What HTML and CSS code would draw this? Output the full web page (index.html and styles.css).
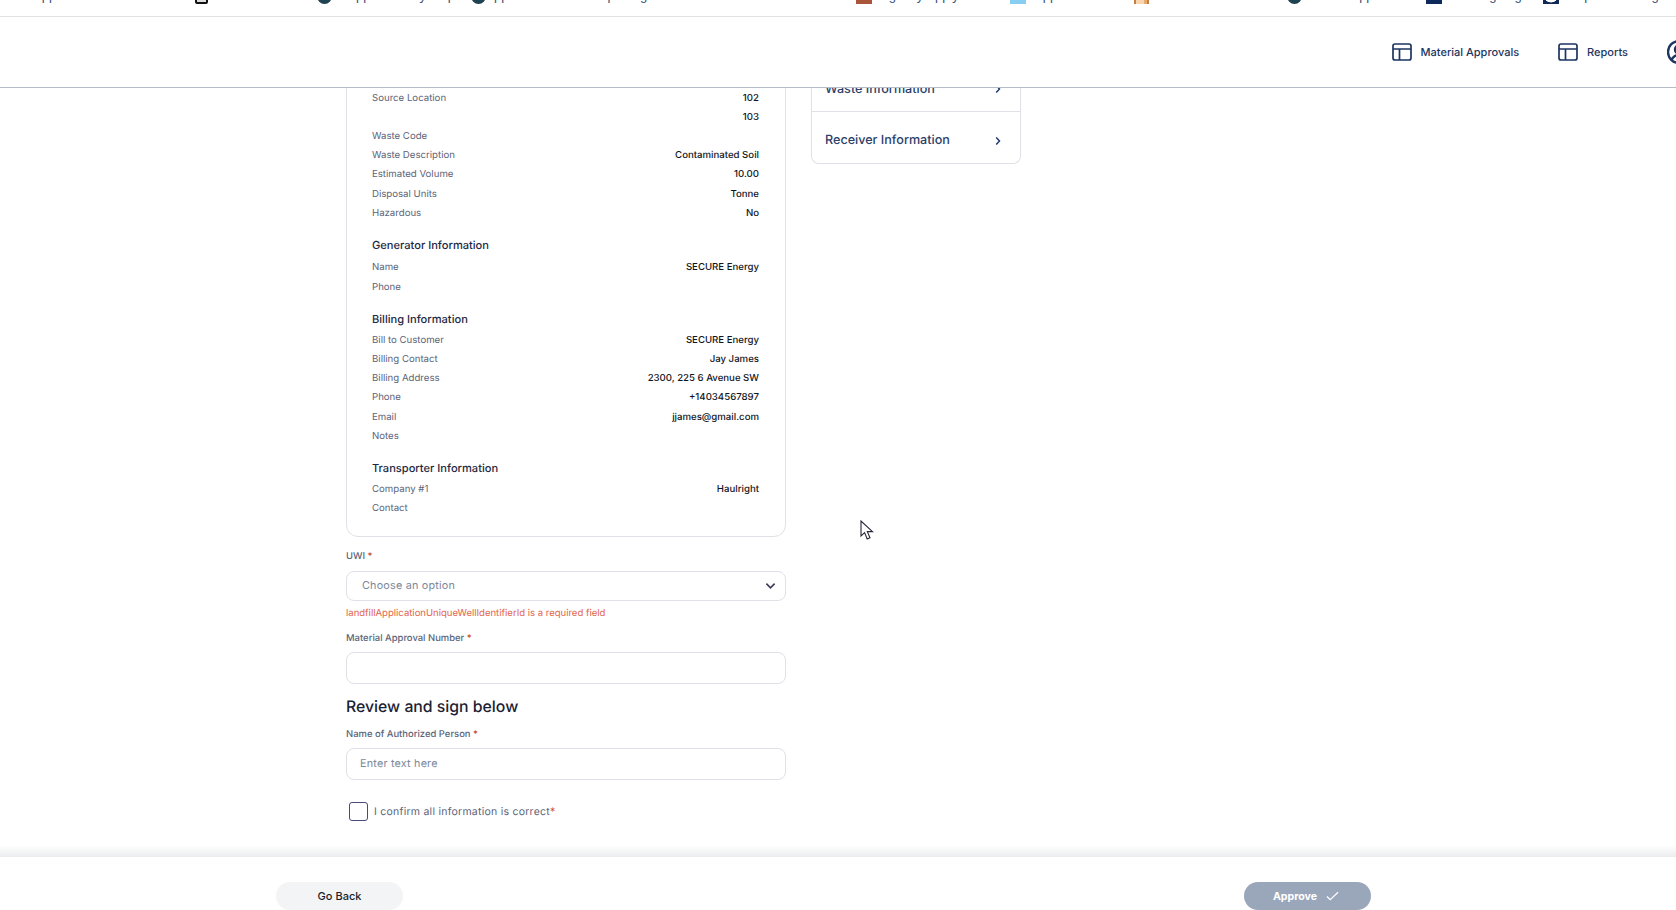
FILE: index.html
```html
<!DOCTYPE html>
<html lang="en">
<head>
<meta charset="utf-8">
<title>Material Approval</title>
<link rel="stylesheet" href="styles.css">
</head>
<body>
<div class="bookmarks">
  <div class="bookmark-row">
    <span class="bm bm-1">App</span>
    <span class="bm bm-2"><i class="fav fav-doc"></i>Home</span>
    <span class="bm bm-3"><i class="fav fav-teal"></i>Support Safety Map</span>
    <span class="bm bm-4"><i class="fav fav-teal"></i>pp Online Portal Reporting</span>
    <span class="bm bm-5"><i class="fav fav-brown"></i>Agency Apply</span>
    <span class="bm bm-6"><i class="fav fav-blue"></i>App</span>
    <span class="bm bm-7"><i class="fav fav-orange"></i>Document</span>
    <span class="bm bm-8"><i class="fav fav-teal"></i>Online Application</span>
    <span class="bm bm-9"><i class="fav fav-navy"></i>Training Log</span>
    <span class="bm bm-10"><i class="fav fav-ring"></i>Inspect Job Log</span>
  </div>
</div>

<header class="topbar">
  <nav class="nav">
    <a class="nav-item">
      <svg class="nav-icon" viewBox="0 0 20 18" fill="none"><rect x="1" y="1" width="18" height="16" rx="2"/><path d="M1 6h18M7.500 6v11"/></svg>
      <span>Material Approvals</span>
    </a>
    <a class="nav-item">
      <svg class="nav-icon" viewBox="0 0 20 18" fill="none"><rect x="1" y="1" width="18" height="16" rx="2"/><path d="M1 6h18M7.500 6v11"/></svg>
      <span>Reports</span>
    </a>
    <svg class="user-icon" viewBox="0 0 24 24" fill="none"><circle cx="12" cy="12" r="11"/><circle cx="12" cy="9.500" r="4"/><path d="M4.500 20c1.500-3.500 4-5 7.500-5s6 1.500 7.500 5"/></svg>
  </nav>
</header>

<main class="content">
  <div class="form-col">
    <section class="summary-card">
      <div class="row"><span>Source Location</span><b>102</b></div>
      <div class="row"><span></span><b>103</b></div>
      <div class="row"><span>Waste Code</span><b></b></div>
      <div class="row"><span>Waste Description</span><b>Contaminated Soil</b></div>
      <div class="row"><span>Estimated Volume</span><b>10.00</b></div>
      <div class="row"><span>Disposal Units</span><b>Tonne</b></div>
      <div class="row"><span>Hazardous</span><b>No</b></div>

      <h3 class="sub-head sub-head-first">Generator Information</h3>
      <div class="row"><span>Name</span><b>SECURE Energy</b></div>
      <div class="row"><span>Phone</span><b></b></div>

      <h3 class="sub-head">Billing Information</h3>
      <div class="row"><span>Bill to Customer</span><b>SECURE Energy</b></div>
      <div class="row"><span>Billing Contact</span><b>Jay James</b></div>
      <div class="row"><span>Billing Address</span><b>2300, 225 6 Avenue SW</b></div>
      <div class="row"><span>Phone</span><b>+14034567897</b></div>
      <div class="row"><span>Email</span><b>jjames@gmail.com</b></div>
      <div class="row"><span>Notes</span><b></b></div>

      <h3 class="sub-head">Transporter Information</h3>
      <div class="row"><span>Company #1</span><b>Haulright</b></div>
      <div class="row"><span>Contact</span><b></b></div>
    </section>

    <label class="field-label field-label-uwi">UWI <em>*</em></label>
    <div class="control select-control">
      <span class="placeholder">Choose an option</span>
      <svg class="chevron-down" viewBox="0 0 12 8" fill="none"><path d="M1.500 1.500 6 6l4.500-4.500"/></svg>
    </div>
    <p class="error">landfillApplicationUniqueWellIdentifierId is a required field</p>

    <label class="field-label field-label-number">Material Approval Number <em>*</em></label>
    <div class="control"></div>

    <h2 class="review-head">Review and sign below</h2>

    <label class="field-label field-label-name">Name of Authorized Person <em>*</em></label>
    <div class="control control-name"><span class="placeholder">Enter text here</span></div>

    <div class="confirm">
      <span class="checkbox"></span>
      <span class="confirm-text">I confirm all information is correct<em>*</em></span>
    </div>
  </div>

  <aside class="side-card">
    <div class="side-row side-row-first"><span>Waste Information</span><svg class="chevron-right" viewBox="0 0 6 10" fill="none"><path d="M1.200 1.500 4.500 5 1.200 8.500"/></svg></div>
    <div class="side-row"><span>Receiver Information</span><svg class="chevron-right" viewBox="0 0 6 10" fill="none"><path d="M1.200 1.500 4.500 5 1.200 8.500"/></svg></div>
  </aside>
</main>

<footer class="footer">
  <button class="btn btn-back">Go Back</button>
  <button class="btn btn-approve">Approve <svg class="check" viewBox="0 0 14 10" fill="none"><path d="M1 5.500 4.500 9 13 1"/></svg></button>
</footer>

<svg class="cursor" viewBox="0 0 14 21"><path d="M1 1v15l3.600-3.400 2.600 6.400 2.800-1.200-2.700-6.200H12.500z" fill="#fff" stroke="#2a2438" stroke-width="1.100"/></svg>
</body>
</html>
```

FILE: styles.css
```css
* { box-sizing: border-box; }
html, body { margin: 0; height: 100%; }
body {
  width: 1676px;
  height: 910px;
  overflow: hidden;
  display: flex;
  flex-direction: column;
  background: #fff;
  font-family: Inter, "Noto Sans", sans-serif;
  color: #1a1f2c;
  position: relative;
  text-rendering: geometricPrecision;
}

/* Browser bookmarks strip, mostly scrolled off */
.bookmarks {
  height: 17px;
  flex: none;
  overflow: hidden;
  background: #fff;
  border-bottom: 1px solid #e2e2e2;
}
.bookmark-row {
  display: flex;
  height: 16px;
  margin-top: -12px;
  padding-left: 33px;
  font: 13px/16px "Liberation Sans", sans-serif;
  color: #35507a;
  white-space: nowrap;
  text-rendering: auto;
}
.bm { display: flex; flex: none; gap: 8px; overflow: hidden; }
.bm-1 { width: 162px; }
.bm-2 { width: 122px; }
.bm-3 { width: 154px; }
.bm-4 { width: 385px; }
.bm-5 { width: 154px; }
.bm-6 { width: 124px; }
.bm-7 { width: 153px; }
.bm-8 { width: 139px; }
.bm-9 { width: 117px; }
.bm-10 { width: 133px; }
.fav { flex: none; display: block; width: 15px; height: 16px; }
.fav-doc { width: 13px; border: 2px solid #111; border-radius: 2px; background: #ddd; }
.fav-teal { border-radius: 50%; background: #1f4350; }
.fav-brown { width: 16px; background: #a9553a; }
.fav-blue { width: 16px; background: #88cdf2; }
.fav-orange { background: linear-gradient(90deg, #c47d45 0 2px, #f8d6b0 2px 10px, #e9a96d 10px 13px, #c47d45 13px); }
.fav-navy { width: 16px; background: #0e2a5c; }
.fav-ring { width: 16px; background: radial-gradient(circle at 50% 45%, #fff 0 7px, #10295a 7.500px); }

/* App header */
.topbar {
  height: 71px;
  flex: none;
  display: flex;
  justify-content: flex-end;
  align-items: center;
  background: #fff;
  border-bottom: 1px solid #b4bcc8;
  position: relative;
  z-index: 2;
}
.nav {
  display: flex;
  align-items: center;
  gap: 39px;
  margin-right: -15px;
}
.nav-item {
  display: flex;
  align-items: center;
  gap: 9px;
  font-size: 11px;
  font-weight: 500;
  color: #1c3561;
}
.nav-icon { width: 20px; height: 18px; flex: none; }
.nav-icon rect, .nav-icon path { stroke: #1c3561; stroke-width: 1.700; }
.user-icon { width: 24px; height: 24px; flex: none; }
.user-icon circle, .user-icon path { stroke: #1c3561; stroke-width: 2.400; }

/* Scrolled content */
.content {
  flex: 1;
  min-height: 0;
  overflow: hidden;
  display: flex;
  align-items: flex-start;
  gap: 25px;
  padding-left: 346px;
}
.form-col { width: 440px; flex: none; }
.summary-card {
  margin-top: -30px;
  padding: 29.500px 26px 17.800px 25px;
  border: 1px solid #dfe1e6;
  border-radius: 12px;
}
.row {
  display: flex;
  justify-content: space-between;
  align-items: center;
  height: 19.200px;
  font-size: 9.650px;
}
.row span { color: #5c6478; }
.row b { font-weight: 500; color: #12151d; }
.sub-head {
  margin: 12.500px 0 1.500px;
  font-size: 11.100px;
  line-height: 20px;
  font-weight: 500;
  color: #1e2a44;
}
.sub-head-first { margin: 12.500px 0 3px; }

.field-label {
  display: block;
  height: 14px;
  margin-bottom: 8px;
  font-size: 9.450px;
  line-height: 16px;
  font-weight: 500;
  color: #5c6478;
}
.field-label em { font-style: normal; color: #c8452e; }
.field-label-uwi { margin-top: 12px; }
.field-label-number { margin-top: 11px; margin-bottom: 7px; }
.field-label-name { margin-top: 10px; margin-bottom: 7px; }
.control {
  height: 32px;
  border: 1px solid #dfe1e6;
  border-radius: 8px;
  display: flex;
  align-items: center;
  padding: 0 14px;
  background: #fff;
}
.select-control { height: 30px; justify-content: space-between; padding-left: 15px; padding-right: 9px; }
.control-name { height: 32px; padding-left: 13px; }
.placeholder { font-size: 10.800px; letter-spacing: 0.200px; color: #7d889b; }
.chevron-down { width: 11px; height: 8px; }
.chevron-down path { stroke: #3d3a5c; stroke-width: 1.800; }
.error {
  margin: 5px 0 0;
  height: 14px;
  font-size: 9.530px;
  line-height: 16px;
  color: #e2654c;
}
.review-head {
  margin: 13px 0 0;
  font-size: 15.800px;
  line-height: 20px;
  font-weight: 500;
  color: #1a2233;
}
.confirm {
  display: flex;
  align-items: center;
  gap: 6px;
  margin: 22px 0 0 3px;
}
.checkbox {
  width: 19px;
  height: 19px;
  flex: none;
  border: 1.500px solid #4a4a78;
  border-radius: 3px;
}
.confirm-text { font-size: 10.500px; letter-spacing: 0.250px; color: #5c6478; }
.confirm-text em { font-style: normal; color: #d2553f; }

.side-card {
  width: 210px;
  flex: none;
  margin-top: -23px;
  border: 1px solid #dfe1e6;
  border-top: 0;
  border-radius: 0 0 8px 8px;
}
.side-row {
  height: 46px;
  display: flex;
  align-items: center;
  justify-content: space-between;
  padding: 0 19px 0 13px;
  font-size: 12.600px;
  font-weight: 500;
  color: #2c4068;
}
.side-row-first { padding-top: 2px; }
.side-row + .side-row { height: 52px; padding-top: 6px; border-top: 1px solid #dfe1e6; }
.chevron-right { width: 6px; height: 10px; }
.chevron-right path { stroke: #1f3c70; stroke-width: 1.500; }

/* Footer actions */
.footer {
  height: 53px;
  flex: none;
  display: flex;
  justify-content: space-between;
  align-items: flex-end;
  padding: 0 305px 0 276px;
  background: #fff;
  position: relative;
}
.footer::before {
  content: "";
  position: absolute;
  left: 0;
  right: 0;
  top: -12px;
  height: 12px;
  background: linear-gradient(to bottom, rgba(235, 236, 238, 0), #ebecee);
}
.btn {
  width: 127px;
  height: 28px;
  border: 0;
  border-radius: 14px;
  font-family: Inter, sans-serif;
  font-size: 11px;
  font-weight: 500;
}
.btn-back { background: #f3f4f6; color: #1a1f2c; }
.btn-approve {
  background: #9aa7bb;
  color: #fff;
  font-size: 10.600px;
  font-weight: 700;
  display: flex;
  align-items: center;
  justify-content: center;
  gap: 9px;
  padding-right: 9px;
}
.check { width: 13px; height: 10px; }
.check path { stroke: #fff; stroke-width: 1.300; }

.cursor {
  position: absolute;
  left: 860px;
  top: 520px;
  width: 14px;
  height: 21px;
}
```
